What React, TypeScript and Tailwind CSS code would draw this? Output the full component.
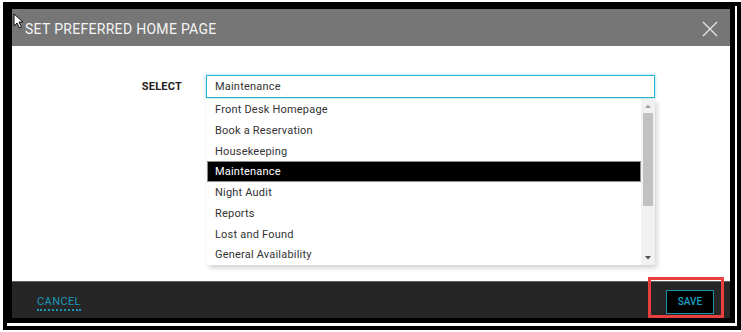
import React from 'react';

const options = [
  'Front Desk Homepage',
  'Book a Reservation',
  'Housekeeping',
  'Maintenance',
  'Night Audit',
  'Reports',
  'Lost and Found',
  'General Availability',
];

const selected = 'Maintenance';

const App: React.FC = () => {
  return (
    <div className="relative w-[741px] h-[332px] bg-white pt-[2px] pl-[3px] font-['Roboto',sans-serif]">
      <div className="w-[738px] h-[328px] border-4 border-black">
        <div className="w-[728px] h-[317px] bg-black pl-[5px] pt-[3px] pr-[5px] pb-[5px] flex flex-col">
          {/* Header */}
          <div className="h-[37px] shrink-0 bg-[#767676] flex items-center justify-between pl-[13px] pr-[12px]">
            <h2 className="text-[14px] text-[#f4f4f4] tracking-[0.3px] pt-[3px]">SET PREFERRED HOME PAGE</h2>
            <svg width="16" height="16" viewBox="0 0 16 16" className="mt-[2px]">
              <path d="M1 1 L15 15 M15 1 L1 15" stroke="#e6e6e6" strokeWidth="1.3" />
            </svg>
          </div>

          {/* Body */}
          <div className="flex-1 bg-white pt-[29px]">
            <div className="flex items-start">
              <div className="w-[194px] pr-[24px] h-[23px] flex items-center justify-end pt-[2px]">
                <span className="text-[11px] font-bold text-[#222] tracking-[0.2px]">SELECT</span>
              </div>
              <div className="relative">
                <div className="w-[449px] h-[23px] border border-[#2ab4d3] shadow-[0_0_3px_rgba(42,180,211,0.6)] flex items-center pl-[8px] pt-[2px]">
                  <span className="text-[11px] text-[#333] tracking-[0.2px]">Maintenance</span>
                </div>

                {/* Dropdown */}
                <div className="absolute left-[1px] top-[24px] w-[448px] bg-white flex shadow-[2px_3px_5px_rgba(0,0,0,0.18)] z-10">
                  <ul className="w-[434px]">
                    {options.map((opt) => (
                      <li
                        key={opt}
                        className={
                          opt === selected
                            ? 'h-[20.75px] flex items-center pl-[7px] pt-[1px] bg-black text-white border border-[#8a8a8a] text-[11px] tracking-[0.2px]'
                            : 'h-[20.75px] flex items-center pl-[8px] pt-[2px] text-[#333] text-[11px] tracking-[0.2px]'
                        }
                      >
                        {opt}
                      </li>
                    ))}
                  </ul>
                  <div className="w-[14px] bg-[#f1f1f1] flex flex-col items-center">
                    <svg width="8" height="14" viewBox="0 0 8 14" className="shrink-0">
                      <path d="M1 9 L4 5.5 L7 9 Z" fill="#a3a3a3" />
                    </svg>
                    <div className="w-[10px] h-[93px] bg-[#c1c1c1]" />
                    <div className="flex-1" />
                    <svg width="8" height="14" viewBox="0 0 8 14" className="shrink-0">
                      <path d="M1 5 L4 8.5 L7 5 Z" fill="#505050" />
                    </svg>
                  </div>
                </div>
              </div>
            </div>
          </div>

          {/* Footer */}
          <div className="h-[37px] shrink-0 bg-[#262626] border-t border-[#606060] flex items-center justify-between pl-[25px] pr-[16px] pt-[3px]">
            <button className="text-[11px] text-[#1a96b8] tracking-[0.4px] border-b-2 border-dotted border-[#1a96b8] leading-[13px] pb-[1px] mt-[2px]">
              CANCEL
            </button>
            <button className="w-[48px] h-[24px] bg-black border border-[#1b8ea8] text-[10px] font-medium text-[#1d9fc1] flex items-center justify-center">
              SAVE
            </button>
          </div>
        </div>
      </div>

      {/* Annotation highlight */}
      <div className="absolute left-[648px] top-[277px] w-[76px] h-[41px] border-[3px] border-[#e8403e]" />

      {/* Mouse cursor */}
      <svg width="12" height="16" viewBox="0 0 12 16" className="absolute left-[13px] top-[13px]">
        <path d="M1 1 L1 13 L4 10 L6.5 15 L8.5 14 L6 9 L10 9 Z" fill="#fff" stroke="#111" strokeWidth="1" />
      </svg>
    </div>
  );
};

export default App;
